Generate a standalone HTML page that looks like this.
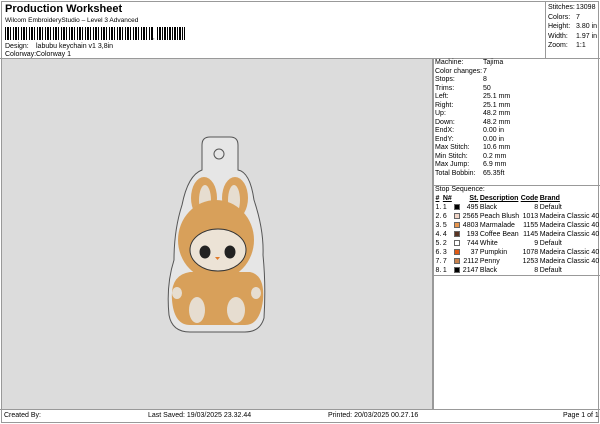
<!DOCTYPE html>
<html><head><style>
*{margin:0;padding:0;box-sizing:border-box}
body{width:600px;height:424px;background:#fff;font-family:"Liberation Sans",sans-serif;font-size:7px;color:#000;position:relative;overflow:hidden}
.a{position:absolute;white-space:nowrap}
.frame{position:absolute;left:1px;top:1px;width:598px;height:422px;border:1px solid #999}
.canvas{position:absolute;left:2px;top:58px;width:431px;height:351px;background:#dcdcdc;border-top:1px solid #999;border-right:1px solid #999}
.bc{position:absolute;left:5px;top:27px;height:13px;width:148px;background:repeating-linear-gradient(90deg,#000 0 1px,#fff 1px 2px,#000 2px 3px,#000 3px 4px,#fff 4px 5px,#000 5px 6px,#fff 6px 8px)}
.bc2{position:absolute;left:157px;top:27px;height:13px;width:28px;background:repeating-linear-gradient(90deg,#000 0 1px,#fff 1px 2px,#000 2px 4px,#fff 4px 5px)}
table{border-collapse:collapse;font-size:7px}
td{padding:0 0 0 1.5px;height:9px;line-height:9px;white-space:nowrap}
.sw{display:inline-block;width:6px;height:6px;border:1px solid #666;vertical-align:-1px;margin:0 1px}
</style></head><body>
<div class="frame"></div>
<div class="a" style="left:5px;top:3px;font-size:11px;font-weight:bold">Production Worksheet</div>
<div class="a" style="left:5px;top:17px;font-size:6.5px">Wilcom EmbroideryStudio – Level 3 Advanced</div>
<div class="bc"></div><div class="a" style="left:153px;top:35px;font-size:6px">,</div><div class="bc2"></div>
<div class="a" style="left:5px;top:43px">Design:</div><div class="a" style="left:36px;top:43px">labubu keychain v1 3,8in</div>
<div class="a" style="left:5px;top:51px">Colorway:</div><div class="a" style="left:36px;top:51px">Colorway 1</div>
<div class="a" style="left:545px;top:1px;width:54px;height:57px;border-left:1px solid #999"></div>
<div class="a" style="left:548px;top:3px;line-height:9.5px">Stitches:<br>Colors:<br>Height:<br>Width:<br>Zoom:</div>
<div class="a" style="left:576px;top:3px;line-height:9.5px">13098<br>7<br>3.80 in<br>1.97 in<br>1:1</div>
<div class="a" style="left:0;top:58px;width:600px;border-top:1px solid #999"></div>
<div class="canvas"></div>
<svg class="a" style="left:150px;top:90px" width="150" height="260" viewBox="0 0 150 260">
<path d="M52 80 L52 55 Q52 47 60 47 L80 47 Q88 47 88 55 L88 80 Q100 82 104 110 Q114 140 113 165 Q116 195 114 228 Q110 242 95 242 L40 242 Q22 242 19 225 Q16 195 24 170 Q24 140 32 115 Q38 85 52 80 Z" fill="#e6e6e6" stroke="#555" stroke-width="1"/>
<circle cx="69" cy="64" r="5" fill="none" stroke="#555"/>
<ellipse cx="54" cy="108" rx="13" ry="21" fill="#d9a25e"/><ellipse cx="85" cy="108" rx="13" ry="21" fill="#d9a25e"/>
<ellipse cx="55" cy="110" rx="6" ry="15" fill="#e6ddd0"/><ellipse cx="84" cy="110" rx="6" ry="15" fill="#e6ddd0"/>
<path d="M22 210 Q20 185 40 182 L100 182 Q115 185 113 210 Q110 235 95 235 L40 235 Q24 235 22 210Z" fill="#d8a05a"/>
<ellipse cx="66" cy="150" rx="38" ry="40" fill="#d8a05a"/>
<ellipse cx="68" cy="160" rx="28" ry="21" fill="#ece3d6" stroke="#333"/>
<ellipse cx="55" cy="162" rx="5.5" ry="6.5" fill="#222"/><ellipse cx="80" cy="162" rx="5.5" ry="6.5" fill="#222"/>
<path d="M65 167 L70 167 L67.5 170Z" fill="#e07a2a"/>
<ellipse cx="47" cy="220" rx="8" ry="13" fill="#e6ddd0"/><ellipse cx="86" cy="220" rx="9" ry="13" fill="#e6ddd0"/>
<ellipse cx="27" cy="203" rx="5" ry="6" fill="#e6ddd0"/><ellipse cx="106" cy="203" rx="5" ry="6" fill="#e6ddd0"/>
</svg>
<div class="a" style="left:433px;top:58px;width:167px;height:351px;border-left:1px solid #999"></div>
<div class="a" style="left:435px;top:59px;line-height:8.5px">Machine:<br>Color changes:<br>Stops:<br>Trims:<br>Left:<br>Right:<br>Up:<br>Down:<br>EndX:<br>EndY:<br>Max Stitch:<br>Min Stitch:<br>Max Jump:<br>Total Bobbin:</div>
<div class="a" style="left:483px;top:59px;line-height:8.5px">Tajima<br>7<br>8<br>50<br>25.1 mm<br>25.1 mm<br>48.2 mm<br>48.2 mm<br>0.00 in<br>0.00 in<br>10.6 mm<br>0.2 mm<br>6.9 mm<br>65.35ft</div>
<div class="a" style="left:433px;top:185px;width:167px;border-top:1px solid #999"></div>
<div class="a" style="left:435px;top:186px">Stop Sequence:</div>
<table class="a" style="left:434px;top:194px">
<tr style="font-weight:bold;text-decoration:underline"><td>#</td><td>N#</td><td></td><td style="text-align:right">St.</td><td>Description</td><td style="text-align:right">Code</td><td>Brand</td></tr>
<tr><td>1.</td><td>1</td><td><span class="sw" style="background:#000"></span></td><td align="right">495</td><td>Black</td><td align="right">8</td><td>Default</td></tr>
<tr><td>2.</td><td>6</td><td><span class="sw" style="background:#f2d6c8"></span></td><td align="right">2565</td><td>Peach Blush</td><td align="right">1013</td><td>Madeira Classic 40</td></tr>
<tr><td>3.</td><td>5</td><td><span class="sw" style="background:#e8964e"></span></td><td align="right">4803</td><td>Marmalade</td><td align="right">1155</td><td>Madeira Classic 40</td></tr>
<tr><td>4.</td><td>4</td><td><span class="sw" style="background:#5a3422"></span></td><td align="right">193</td><td>Coffee Bean</td><td align="right">1145</td><td>Madeira Classic 40</td></tr>
<tr><td>5.</td><td>2</td><td><span class="sw" style="background:#fff"></span></td><td align="right">744</td><td>White</td><td align="right">9</td><td>Default</td></tr>
<tr><td>6.</td><td>3</td><td><span class="sw" style="background:#e05a14"></span></td><td align="right">37</td><td>Pumpkin</td><td align="right">1078</td><td>Madeira Classic 40</td></tr>
<tr><td>7.</td><td>7</td><td><span class="sw" style="background:#c8824e"></span></td><td align="right">2112</td><td>Penny</td><td align="right">1253</td><td>Madeira Classic 40</td></tr>
<tr><td>8.</td><td>1</td><td><span class="sw" style="background:#000"></span></td><td align="right">2147</td><td>Black</td><td align="right">8</td><td>Default</td></tr>
</table>
<div class="a" style="left:433px;top:275px;width:167px;border-top:1px solid #999"></div>
<div class="a" style="left:0;top:409px;width:600px;border-top:1px solid #999"></div>
<div class="a" style="left:4px;top:412px">Created By:</div>
<div class="a" style="left:148px;top:412px">Last Saved: 19/03/2025 23.32.44</div>
<div class="a" style="left:328px;top:412px">Printed: 20/03/2025 00.27.16</div>
<div class="a" style="left:563px;top:412px">Page 1 of 1</div>
</body></html>
